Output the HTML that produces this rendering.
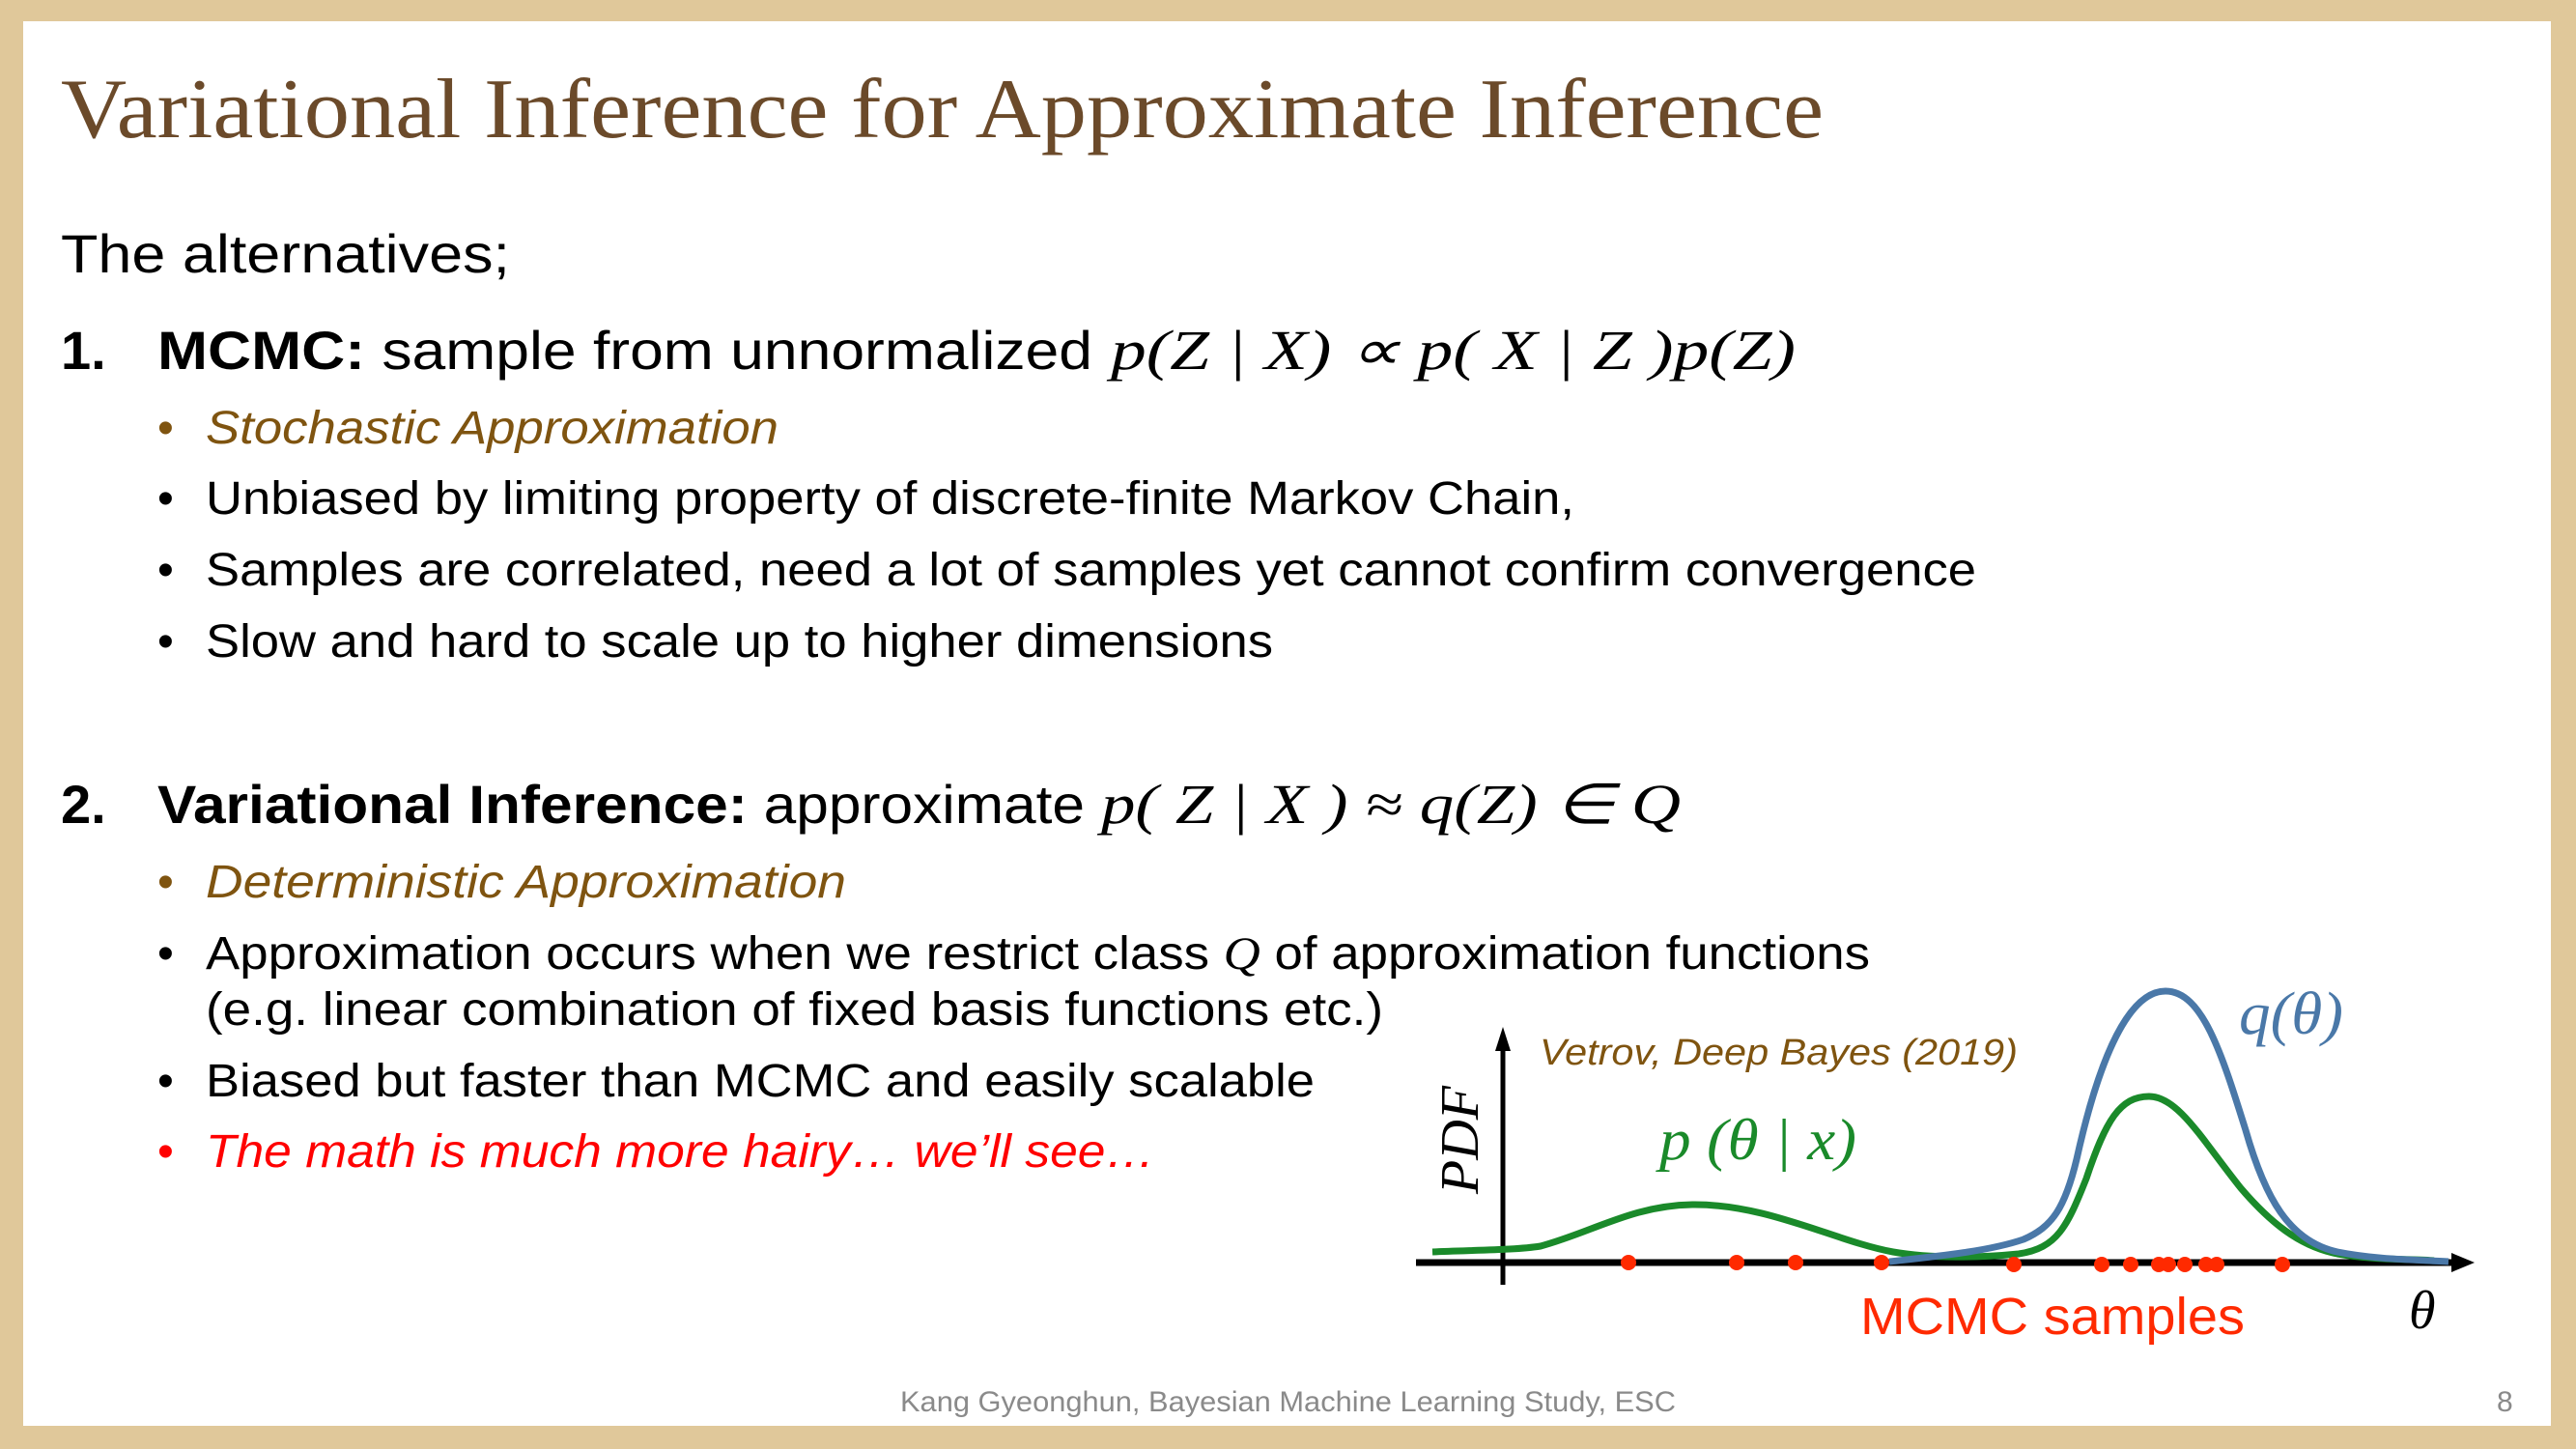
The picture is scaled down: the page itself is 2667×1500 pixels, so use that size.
<!DOCTYPE html>
<html><head><meta charset="utf-8"><style>
html,body{margin:0;padding:0;width:2667px;height:1500px;overflow:hidden;background:#e0c89a}
svg{display:block}
</style></head><body>
<svg width="2667" height="1500" viewBox="0 0 2667 1500" xmlns="http://www.w3.org/2000/svg">
<rect x="0" y="0" width="2667" height="1500" fill="#e0c89a"/>
<rect x="24" y="22" width="2617" height="1454" fill="#ffffff"/>

<text x="63" y="142" font-family="Liberation Serif, serif" font-size="88" fill="#6b4a2a" textLength="1825" lengthAdjust="spacingAndGlyphs">Variational Inference for Approximate Inference</text>

<g font-family="Liberation Sans, sans-serif" fill="#000">
<text x="63" y="282" font-size="56" textLength="465" lengthAdjust="spacingAndGlyphs">The alternatives;</text>

<text x="63" y="382" font-size="56" font-weight="bold">1.</text>
<text x="163" y="382" font-size="56" textLength="968" lengthAdjust="spacingAndGlyphs"><tspan font-weight="bold">MCMC:</tspan> sample from unnormalized</text>
<text x="1150" y="382" font-size="58" font-family="Liberation Serif, serif" font-style="italic" textLength="709" lengthAdjust="spacingAndGlyphs">p(Z | X) ∝ p( X | Z )p(Z)</text>

<text x="163" y="459" font-size="48" fill="#7f5410">•</text>
<text x="213" y="459" font-size="48" font-style="italic" fill="#7f5410" textLength="593" lengthAdjust="spacingAndGlyphs">Stochastic Approximation</text>
<text x="163" y="532" font-size="48">•</text>
<text x="213" y="532" font-size="48" textLength="1417" lengthAdjust="spacingAndGlyphs">Unbiased by limiting property of discrete-finite Markov Chain,</text>
<text x="163" y="606" font-size="48">•</text>
<text x="213" y="606" font-size="48" textLength="1833" lengthAdjust="spacingAndGlyphs">Samples are correlated, need a lot of samples yet cannot confirm convergence</text>
<text x="163" y="680" font-size="48">•</text>
<text x="213" y="680" font-size="48" textLength="1105" lengthAdjust="spacingAndGlyphs">Slow and hard to scale up to higher dimensions</text>

<text x="63" y="852" font-size="56" font-weight="bold">2.</text>
<text x="163" y="852" font-size="56" textLength="960" lengthAdjust="spacingAndGlyphs"><tspan font-weight="bold">Variational Inference:</tspan> approximate</text>
<text x="1140" y="852" font-size="58" font-family="Liberation Serif, serif" font-style="italic" textLength="600" lengthAdjust="spacingAndGlyphs">p( Z | X ) ≈ q(Z) ∈ Q</text>

<text x="163" y="929" font-size="48" fill="#7f5410">•</text>
<text x="213" y="929" font-size="48" font-style="italic" fill="#7f5410" textLength="663" lengthAdjust="spacingAndGlyphs">Deterministic Approximation</text>
<text x="163" y="1003" font-size="48">•</text>
<text x="213" y="1003" font-size="48" textLength="1723" lengthAdjust="spacingAndGlyphs">Approximation occurs when we restrict class <tspan font-family="Liberation Serif, serif" font-style="italic">Q</tspan> of approximation functions</text>
<text x="213" y="1061" font-size="48" textLength="1219" lengthAdjust="spacingAndGlyphs">(e.g. linear combination of fixed basis functions etc.)</text>
<text x="163" y="1135" font-size="48">•</text>
<text x="213" y="1135" font-size="48" textLength="1148" lengthAdjust="spacingAndGlyphs">Biased but faster than MCMC and easily scalable</text>
<text x="163" y="1208" font-size="48" fill="#ff0000">•</text>
<text x="213" y="1208" font-size="48" font-style="italic" fill="#ff0000" textLength="983" lengthAdjust="spacingAndGlyphs">The math is much more hairy… we’ll see…</text>
</g>

<!-- chart -->
<g>
<line x1="1556" y1="1330" x2="1556" y2="1080" stroke="#000" stroke-width="5"/>
<polygon points="1556,1063 1548,1088 1564,1088" fill="#000"/>
<line x1="1466" y1="1307" x2="2545" y2="1307" stroke="#000" stroke-width="7"/>
<polygon points="2562,1307 2538,1297 2538,1317" fill="#000"/>
<path d="M1483,1296 C1530,1294 1570,1294 1595,1290 C1650,1275 1690,1248 1752,1247 C1830,1246 1900,1285 1960,1296 C2000,1303 2050,1302 2090,1298 C2130,1292 2140,1270 2160,1220 C2180,1160 2195,1135 2225,1135 C2255,1135 2280,1180 2320,1230 C2350,1265 2380,1290 2420,1298 C2460,1305 2500,1303 2520,1305" fill="none" stroke="#1a8a2a" stroke-width="7"/>
<path d="M1956,1306 C2010,1300 2060,1295 2095,1283 C2125,1270 2138,1250 2150,1200 C2170,1110 2200,1026 2242,1026 C2280,1026 2300,1090 2325,1170 C2345,1240 2370,1285 2420,1296 C2460,1304 2500,1304 2535,1306" fill="none" stroke="#4a78a8" stroke-width="7"/>
<g fill="#ff2a00">
<circle cx="1686" cy="1307" r="8"/><circle cx="1798" cy="1307" r="8"/><circle cx="1859" cy="1307" r="8"/><circle cx="1948" cy="1307" r="8"/><circle cx="2085" cy="1309" r="8"/><circle cx="2176" cy="1309" r="8"/><circle cx="2206" cy="1309" r="8"/><circle cx="2235" cy="1309" r="8"/><circle cx="2245" cy="1309" r="8"/><circle cx="2262" cy="1309" r="8"/><circle cx="2284" cy="1309" r="8"/><circle cx="2295" cy="1309" r="8"/><circle cx="2363" cy="1309" r="8"/>
</g>
<text x="1594" y="1102" font-family="Liberation Sans, sans-serif" font-size="38" font-style="italic" fill="#7f5410" textLength="495" lengthAdjust="spacingAndGlyphs">Vetrov, Deep Bayes (2019)</text>
<text x="1718" y="1200" font-family="Liberation Serif, serif" font-size="60" font-style="italic" fill="#1a8a2a" textLength="204" lengthAdjust="spacingAndGlyphs">p (θ | x)</text>
<text x="2318" y="1070" font-family="Liberation Serif, serif" font-size="62" font-style="italic" fill="#4a78a8" textLength="108" lengthAdjust="spacingAndGlyphs">q(θ)</text>
<text transform="translate(1530,1236) rotate(-90)" font-family="Liberation Serif, serif" font-size="56" font-style="italic" fill="#000" textLength="112" lengthAdjust="spacingAndGlyphs">PDF</text>
<text x="1926" y="1381" font-family="Liberation Sans, sans-serif" font-size="54" fill="#ff2a00" textLength="398" lengthAdjust="spacingAndGlyphs">MCMC samples</text>
<text x="2494" y="1375" font-family="Liberation Serif, serif" font-size="56" font-style="italic" fill="#000">θ</text>
</g>

<text x="932" y="1461" font-family="Liberation Sans, sans-serif" font-size="30" fill="#8a8a8a" textLength="803" lengthAdjust="spacingAndGlyphs">Kang Gyeonghun, Bayesian Machine Learning Study, ESC</text>
<text x="2585" y="1461" font-family="Liberation Sans, sans-serif" font-size="30" fill="#8a8a8a">8</text>
</svg>
</body></html>
